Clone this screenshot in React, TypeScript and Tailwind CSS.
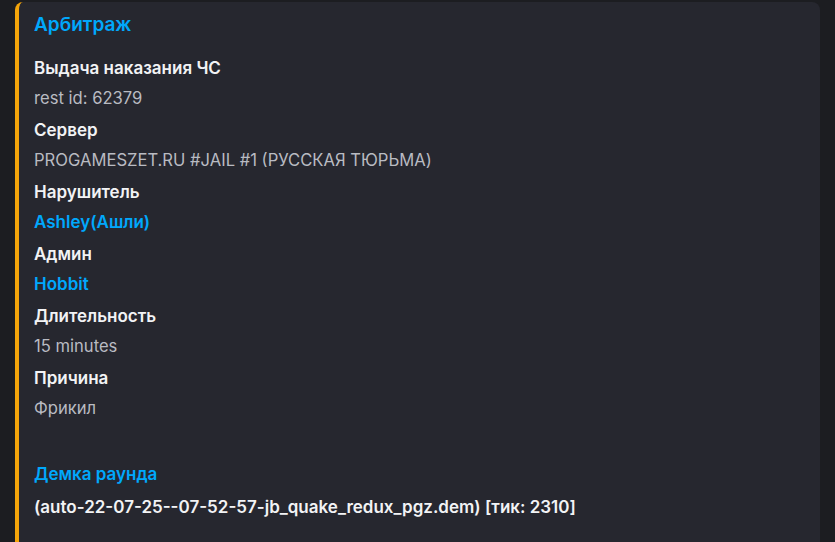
const fields = [
  { name: "Выдача наказания ЧС", value: "rest id: 62379" },
  { name: "Сервер", value: "PROGAMESZET.RU #JAIL #1 (РУССКАЯ ТЮРЬМА)" },
  { name: "Нарушитель", value: "Ashley(Ашли)", link: true },
  { name: "Админ", value: "Hobbit", link: true },
  { name: "Длительность", value: "15 minutes" },
  { name: "Причина", value: "Фрикил" },
];

export default function App() {
  return (
    <div
      className="w-[835px] h-[542px] overflow-hidden bg-[#1c1d21] pl-[15px] pr-[15px] pt-[2px]"
      style={{ fontFamily: "Inter, 'Noto Sans', sans-serif" }}
    >
      <div className="h-[600px] rounded-[8px] border-l-4 border-[#f5a50a] bg-[#26272f] pl-[15px] pt-[8px]">
        {/* Title */}
        <div className="text-[19px] leading-[30px] font-semibold text-[#00a8fc]">Арбитраж</div>

        <div className="mt-[13px]">
          {fields.map((f) => (
            <div key={f.name} className="mb-[2px]">
              <div className="text-[17px] leading-[30px] font-semibold text-[#f2f3f5]">{f.name}</div>
              <div
                className={
                  f.link
                    ? "text-[17px] leading-[30px] font-semibold text-[#00a8fc]"
                    : "text-[16.6px] leading-[30px] text-[#b9bbc2]"
                }
              >
                {f.value}
              </div>
            </div>
          ))}
        </div>

        {/* Demo link */}
        <div className="mt-[36px]">
          <div className="text-[17px] leading-[30px] font-semibold text-[#00a8fc]">Демка раунда</div>
          <div className="mt-[3px] text-[17px] leading-[30px] font-semibold text-[#f2f3f5]">
            (auto-22-07-25--07-52-57-jb_quake_redux_pgz.dem) [тик: 2310]
          </div>
        </div>
      </div>
    </div>
  );
}
